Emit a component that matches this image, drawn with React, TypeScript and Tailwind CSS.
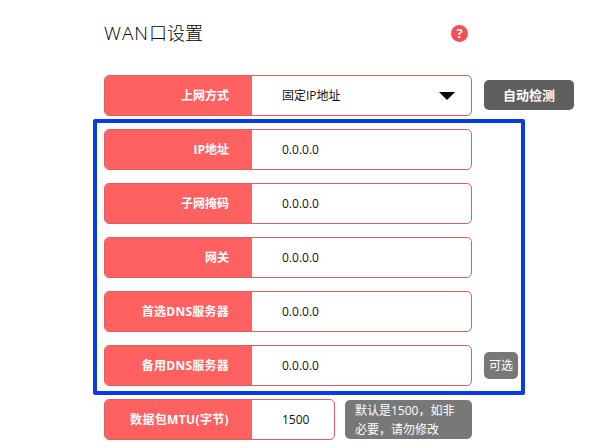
import type { ReactNode } from 'react'

const addressFields = [
  { label: 'IP地址', value: '0.0.0.0' },
  { label: '子网掩码', value: '0.0.0.0' },
  { label: '网关', value: '0.0.0.0' },
  { label: '首选DNS服务器', value: '0.0.0.0' },
  { label: '备用DNS服务器', value: '0.0.0.0', optional: true }
]

type FieldProps = {
  label: string
  width?: string
  tracking?: string
  children: ReactNode
}

const Field = ({
  label,
  width = 'w-[368px]',
  tracking = '',
  children
}: FieldProps) => {
  return (
    <div
      className={`${width} h-[41px] shrink-0 flex rounded-[5px] border border-[#dc5f64] overflow-hidden bg-white`}
    >
      <div
        className={`${tracking} -my-px -ml-px w-[148px] shrink-0 bg-[#ff6161] text-white font-bold flex items-center justify-end pr-[23px]`}
      >
        {label}
      </div>
      <div className="grow flex items-center justify-between pl-[30px] pr-4 text-[#111]">
        {children}
      </div>
    </div>
  )
}

const App = () => {
  return (
    <div className="w-[600px] h-[448px] overflow-hidden bg-white text-xs whitespace-nowrap font-['Open_Sans','Noto_Sans_CJK_SC',sans-serif]">
      <div className="flex items-center justify-between ml-[104px] w-[364px] h-[41px] mt-[13px]">
        <h1 className="text-lg text-black font-light">
          <span className="text-[19px] tracking-[1px]">WAN</span>
          口设置
        </h1>
        <div className="w-[17px] h-[17px] rounded-full bg-[#fb4b55] text-white text-[13px] leading-none font-bold flex items-center justify-center">
          ?
        </div>
      </div>

      <div className="flex items-start gap-3 ml-[104px] mt-[21px]">
        <Field label="上网方式">
          <span>固定IP地址</span>
          <svg width="16" height="8" viewBox="0 0 16 8">
            <path d="M0 0H16L8 8Z" fill="#000" />
          </svg>
        </Field>
        <button className="mt-[5px] w-[90px] h-[30px] rounded-[5px] bg-[#5e5e5e] text-white text-[13px] font-bold pt-px">
          自动检测
        </button>
      </div>

      {/* static address settings */}
      <div className="ml-[93px] mt-[3px] w-[432px] h-[276px] border-4 border-[#073be6] rounded-[2px] pl-[7px] pt-[6px] flex flex-col gap-[13px]">
        {addressFields.map((field) => (
          <div key={field.label} className="flex items-center gap-3">
            <Field
              label={field.label}
              tracking={field.label.includes('DNS') ? 'tracking-[0.25px]' : ''}
            >
              {field.value}
            </Field>
            {field.optional && (
              <div className="w-[34px] h-[27px] rounded-[5px] bg-[#787878] text-white flex items-center justify-center">
                可选
              </div>
            )}
          </div>
        ))}
      </div>

      <div className="flex items-center gap-[10px] ml-[104px] mt-1">
        <Field
          label="数据包MTU(字节)"
          width="w-[231px]"
          tracking="tracking-[0.35px]"
        >
          1500
        </Field>
        <div className="w-[127px] h-[39px] rounded-[5px] bg-[#787878] text-white leading-[19px] pl-[10px] flex items-center">
          <p>
            默认是1500，如非
            <br />
            必要，请勿修改
          </p>
        </div>
      </div>
    </div>
  )
}

export default App
